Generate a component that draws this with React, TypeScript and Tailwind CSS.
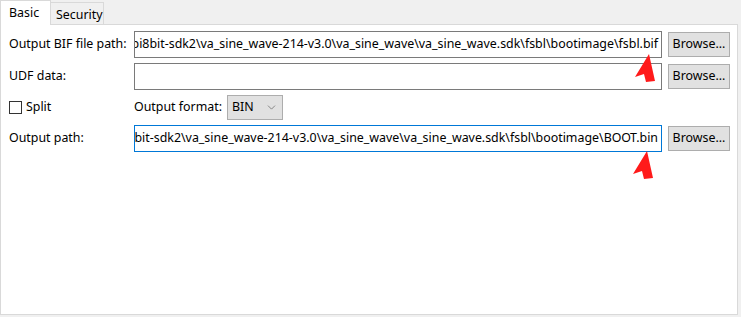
import { ChevronDown } from "lucide-react";

const bifPath =
  "E:\\zynq\\xapp_pi8bit-sdk2\\va_sine_wave-214-v3.0\\va_sine_wave\\va_sine_wave.sdk\\fsbl\\bootimage\\fsbl.bif";
const outHead =
  "E:\\zynq\\xapp_pi8bit-sdk2\\va_sine_wave-214-v3.0\\va_sine_wave\\va_sine_wave.sdk\\fsbl\\bootimage\\BOO";

function PathBox({ focused, children }: { focused?: boolean; children: React.ReactNode }) {
  return (
    <div
      className={`flex h-full items-center justify-end overflow-hidden whitespace-nowrap bg-white pr-[3px] text-[12.4px] text-black ${
        focused ? "border border-[#0078d7]" : "border border-[#7a7a7a]"
      }`}
    >
      {children}
    </div>
  );
}

function Browse() {
  return (
    <button className="h-[25px] w-[62px] self-center border border-[#adadad] bg-[#e1e1e1] text-[12.4px] text-black">
      Browse...
    </button>
  );
}

function Arrow({ x, y }: { x: number; y: number }) {
  return (
    <svg
      className="pointer-events-none absolute"
      style={{ left: x, top: y }}
      width="24"
      height="30"
      viewBox="0 0 24 30"
    >
      <polygon points="16,0 2,23 11,20 13,28 22,27" fill="#ff1a1a" />
    </svg>
  );
}

export default function App() {
  return (
    <div
      className="relative h-[317px] w-[741px] bg-[#f0f0f0] text-[12.4px] text-black"
      style={{ fontFamily: '"Noto Sans", "Noto Sans CJK SC", sans-serif' }}
    >
      <div className="flex h-[24px] items-end">
        <div className="relative z-10 -mb-px flex h-[25px] w-[51px] items-start border-x border-t border-[#d9d9d9] bg-white pl-[8px] pt-[3px]">
          Basic
        </div>
        <div className="flex h-[22px] w-[53px] items-start border-r border-t border-[#d9d9d9] bg-[#f0f0f0] pl-[5px] pt-[3px]">
          Security
        </div>
      </div>
      <div className="h-[291px] w-[738px] border border-[#d9d9d9] bg-white pl-[8px] pt-[6px]">
        <div className="grid grid-cols-[119px_528px_62px] grid-rows-[27px_27px_25px_27px] gap-x-[6px] gap-y-[5px]">
          <div className="flex items-center whitespace-nowrap">Output BIF file path:</div>
          <PathBox>{bifPath}</PathBox>
          <Browse />

          <div className="flex items-center">UDF data:</div>
          <PathBox>{""}</PathBox>
          <Browse />

          <div className="flex items-center gap-[4px]">
            <span className="h-[13px] w-[13px] border border-[#333333] bg-white" />
            Split
          </div>
          <div className="flex items-center gap-[5px]">
            <span>Output format:</span>
            <div className="flex h-[25px] w-[56px] items-center justify-between border border-[#adadad] bg-[#e1e1e1] pl-[4px] pr-[4px]">
              <span>BIN</span>
              <ChevronDown size={13} strokeWidth={1.2} className="text-[#555555]" />
            </div>
          </div>
          <div />

          <div className="flex items-center">Output path:</div>
          <PathBox focused>
            {outHead}
            <span className="-mr-px inline-block h-[15px] w-px bg-black" />
            T.bin
          </PathBox>
          <Browse />
        </div>
      </div>
      <Arrow x={633} y={54} />
      <Arrow x={631} y={151} />
    </div>
  );
}
